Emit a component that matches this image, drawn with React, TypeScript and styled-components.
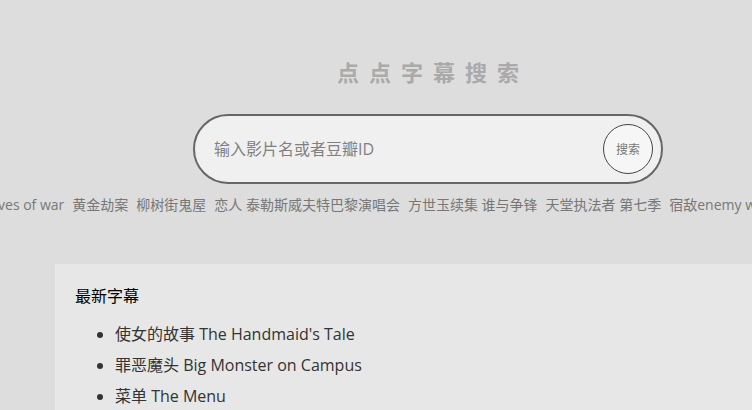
import React from "react";
import styled, { createGlobalStyle } from "styled-components";

/* Styles */
const GlobalStyle = createGlobalStyle`
  html, body {
    margin: 0;
    padding: 0;
    background: #dddddd;
    overflow: hidden;
  }
  body {
    font-family: "Open Sans", "Noto Sans CJK SC", sans-serif;
  }
`;

const Page = styled.div`
  width: 856px;
  display: flex;
  flex-direction: column;
  align-items: center;
`;

const Title = styled.h1`
  margin: 56px 0 0;
  font-size: 22px;
  line-height: 32px;
  font-weight: bold;
  letter-spacing: 10px;
  padding-left: 10px;
  color: #aaaaaa;
`;

const SearchBox = styled.form`
  box-sizing: border-box;
  margin-top: 26px;
  width: 470px;
  height: 70px;
  border: 2px solid #666666;
  border-radius: 35px;
  background: #f0f0f0;
  display: flex;
  align-items: center;
  padding: 0 8px 0 17px;
`;

const SearchInput = styled.input`
  flex: 1;
  border: none;
  outline: none;
  background: transparent;
  font-family: inherit;
  font-size: 16px;
  color: #333;

  &::placeholder {
    color: #808080;
  }
`;

const SearchButton = styled.button`
  box-sizing: border-box;
  width: 50px;
  height: 50px;
  border-radius: 50%;
  border: 1px solid #444444;
  background: #f6f6f6;
  color: #777777;
  font-family: inherit;
  font-size: 12px;
  padding: 0;
  cursor: pointer;
`;

const TagRow = styled.div`
  margin-top: 9px;
  display: flex;
  justify-content: center;
  white-space: nowrap;
  width: 100%;
`;

const Tag = styled.a`
  flex-shrink: 0;
  margin: 0 4px;
  font-size: 14px;
  line-height: 24px;
  color: #777777;
  text-decoration: none;
`;

const Latest = styled.section`
  box-sizing: border-box;
  align-self: stretch;
  margin: 47px 55px 0;
  padding: 19px 20px 20px;
  background: #e7e7e7;
`;

const Heading = styled.div`
  font-size: 16px;
  line-height: 26px;
  color: #000000;
`;

const List = styled.ul`
  margin: 10px 0 0;
  padding-left: 40px;
`;

const Item = styled.li`
  font-size: 16px;
  line-height: 31px;
  color: #333333;
`;

const tags = [
  "Slaves of war",
  "黄金劫案",
  "柳树街鬼屋",
  "恋人 泰勒斯威夫特巴黎演唱会",
  "方世玉续集 谁与争锋",
  "天堂执法者 第七季",
  "宿敌enemy within",
  "繁花Blossom",
];

const latest = [
  "使女的故事 The Handmaid's Tale",
  "罪恶魔头 Big Monster on Campus",
  "菜单 The Menu",
  "奥本海默 Oppenheimer",
];

const App = () => {
  return (
    <Page>
      <GlobalStyle />
      <Title>点点字幕搜索</Title>
      <SearchBox onSubmit={(e) => e.preventDefault()}>
        <SearchInput placeholder="输入影片名或者豆瓣ID" />
        <SearchButton type="submit">搜索</SearchButton>
      </SearchBox>
      <TagRow>
        {tags.map((t) => (
          <Tag key={t} href="#">
            {t}
          </Tag>
        ))}
      </TagRow>
      <Latest>
        <Heading>最新字幕</Heading>
        <List>
          {latest.map((t) => (
            <Item key={t}>{t}</Item>
          ))}
        </List>
      </Latest>
    </Page>
  );
};

export default App;
